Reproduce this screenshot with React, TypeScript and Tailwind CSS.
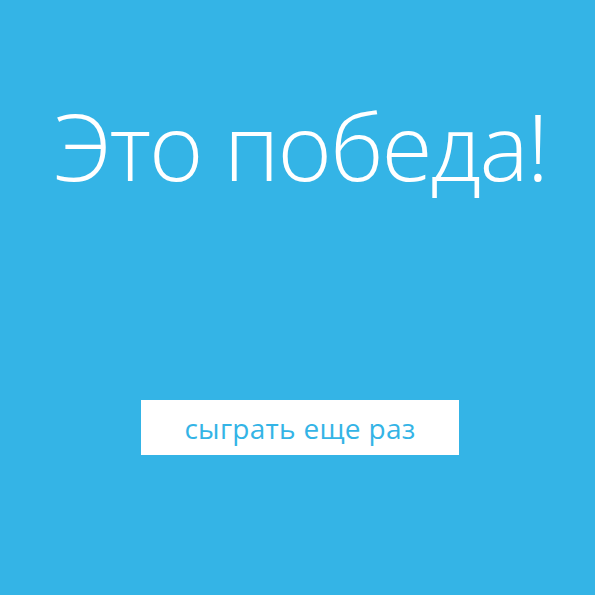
export default function App() {
  return (
    <div
      className="w-[595px] h-[595px] bg-[#34b4e6] flex flex-col items-center"
      style={{ fontFamily: '"Open Sans", "Noto Sans", sans-serif' }}
    >
      <h1 className="mt-[90px] ml-[6px] text-[93px] leading-[110px] font-light text-white tracking-[-2px]">
        Это победа!
      </h1>
      <button className="mt-[200px] ml-[5px] w-[318px] h-[55px] bg-white text-[#34b4e6] text-[28px] font-normal tracking-[0.3px]">
        сыграть еще раз
      </button>
    </div>
  );
}
